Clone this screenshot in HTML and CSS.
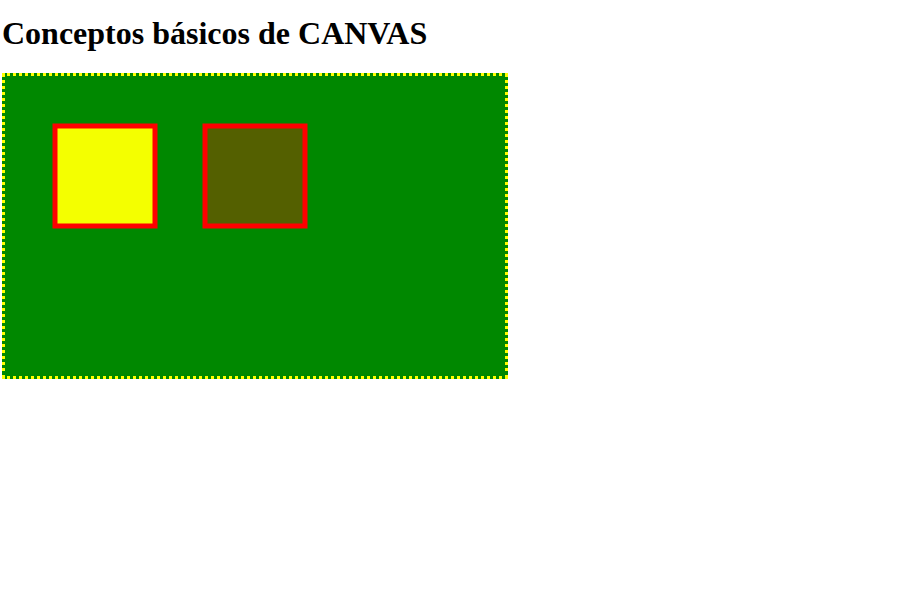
FILE: index.html
```html
<!DOCTYPE html>
<html lang="es">
<head>
<meta charset="utf-8">
<title>Conceptos básicos de CANVAS</title>
<link rel="stylesheet" href="styles.css">
</head>
<body>
<h1 class="title">Conceptos básicos de CANVAS</h1>
<svg class="board" width="500" height="300" viewBox="0 0 500 300" xmlns="http://www.w3.org/2000/svg">
  <rect x="50" y="50" width="100" height="100" fill="#f4ff00" stroke="#ff0000" stroke-width="5"/>
  <rect x="200" y="50" width="100" height="100" fill="#546000" stroke="#ff0000" stroke-width="5"/>
</svg>
</body>
</html>
```
FILE: styles.css
```css
html, body {
  margin: 0;
  background: #ffffff;
}
body {
  padding: 2px;
  font-family: "Liberation Serif", "Times New Roman", serif;
}
.title {
  font-size: 32px;
  font-weight: bold;
  margin: 12.5px 0 21.5px;
  color: #000;
}
.board {
  display: block;
  background: #008800;
  border: 3px dotted #ffff00;
}
```
